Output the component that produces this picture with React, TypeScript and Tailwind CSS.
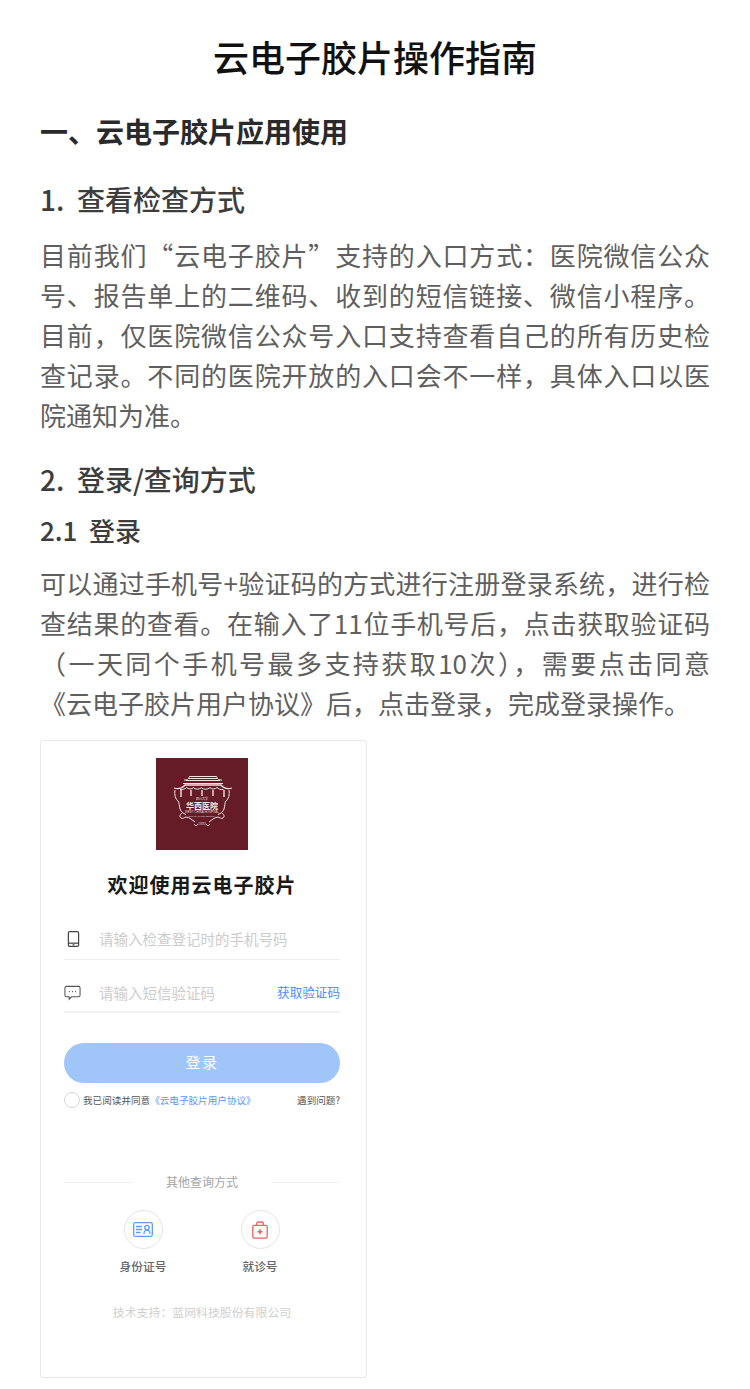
const cjk = "font-['Noto_Sans_CJK_SC','Noto_Sans',sans-serif]";

const intro =
  "目前我们“云电子胶片”支持的入口方式\uFF1A医院微信公众号、报告单上的二维码、收到的短信链接、微信小程序。目前\uFF0C仅医院微信公众号入口支持查看自己的所有历史检查记录。不同的医院开放的入口会不一样\uFF0C具体入口以医院通知为准。";
const loginBefore =
  "可以通过手机号+验证码的方式进行注册登录系统\uFF0C进行检查结果的查看。在输入了11位手机号后\uFF0C点击获取验证码\uFF08一天同个手机号最多支持获取10次\uFF09\uFF0C需要点击同意";
const loginAfter = "后\uFF0C点击登录\uFF0C完成登录操作。";

function PhoneIcon() {
  return (
    <svg viewBox="0 0 14 18" className="w-[13px] h-[18px]" fill="none" stroke="#444" strokeWidth="1.3">
      <rect x="1.500" y="1" width="11" height="16" rx="1.500" />
      <path d="M1.500 13.500h11" />
      <path d="M6 15.300h2" />
    </svg>
  );
}

function ChatIcon() {
  return (
    <svg viewBox="0 0 18 16" className="w-[17px] h-[16px]" fill="none" stroke="#555" strokeWidth="1.1">
      <path d="M2.500 1h13A1.500 1.500 0 0 1 17 2.500v8a1.500 1.500 0 0 1-1.500 1.500H8L5.500 14.600V12h-3A1.500 1.500 0 0 1 1 10.500v-8A1.500 1.500 0 0 1 2.500 1z" />
      <path d="M5.200 6.600h1M8.500 6.600h1M11.800 6.600h1" strokeWidth="1.400" />
    </svg>
  );
}

function IdCardIcon() {
  return (
    <svg viewBox="0 0 20 15" className="w-[20px] h-[15px]" fill="none" stroke="#5b9cf6" strokeWidth="1.3">
      <rect x="0.700" y="0.700" width="18.600" height="13.600" rx="1.500" />
      <path d="M3 4.500h6M3 7.500h6M3 10.500h4.500" />
      <circle cx="14" cy="5.600" r="2.200" />
      <path d="M11 12c0-2.400 1.300-3.900 3-3.900s3 1.500 3 3.900" />
    </svg>
  );
}

function MedKitIcon() {
  return (
    <svg viewBox="0 0 16 18" className="w-[16px] h-[18px]" fill="none" stroke="#f0605a" strokeWidth="1.3">
      <rect x="0.800" y="4.400" width="14.400" height="12.800" rx="1.600" />
      <path d="M4.600 4.400V3a2 2 0 0 1 2-2h2.800a2 2 0 0 1 2 2v1.400" />
      <path d="M8 8.200v5M5.500 10.700h5" strokeWidth="1.600" />
    </svg>
  );
}

function HospitalLogo() {
  return (
    <div className="relative w-[92px] h-[92px] bg-[#651c27]">
      <svg viewBox="0 0 92 92" className="absolute inset-0 w-full h-full blur-[0.3px]" fill="none" stroke="#f1e4e2">
        {/* roof */}
        <path d="M28 22c3 .4 4.500-.8 5.500-3.500h27c1 2.700 2.500 3.900 5.500 3.500" strokeWidth="1" />
        <path d="M30 22.500h34M33 20.500h28" strokeWidth="1" />
        <path d="M27 25.500h40" strokeWidth="1.200" />
        {/* gate beam */}
        <path d="M18 30c4 1.200 8 .6 11-3h36c3 3.600 7 4.200 11 3" strokeWidth="1.300" />
        <path d="M24 31.500c3 .4 5-.6 6.500-2 2 1.800 5 2 7 .2 2 1.800 5 2 8 .1 2.500 1.900 6 1.900 8.500-.1 2 1.800 5 1.600 7-.2 1.500 1.400 3.500 2.400 6.500 2" strokeWidth="1" />
        <path d="M25 32v7M35 32v6M46 32v6M57 32v6M68 32v7" strokeWidth="1.400" />
        {/* crest */}
        <path d="M19 32c-.8 5 .4 9 3 11 1.500 1.500 1 5 2 8 .8 2.500 3 4.500 6 5.500" strokeWidth="1" />
        <path d="M73 32c.8 5-.4 9-3 11-1.500 1.500-1 5-2 8-.8 2.500-3 4.500-6 5.500" strokeWidth="1" />
        <path d="M26 55c-2 1.500-3 3.500-1 5 2 1 3-.5 5-1 4 .5 6 3 9 5M66 55c2 1.500 3 3.500 1 5-2 1-3-.5-5-1-4 .5-6 3-9 5" strokeWidth="1" />
        <path d="M38 66l2 2 2-2M50 66l2 2 2-2" strokeWidth="0.800" />
      </svg>
      <div className="absolute left-0 right-0 top-[40px] text-center text-[#f1e4e2] text-[3px] leading-[3px]">四川大学</div>
      <div className="absolute left-0 right-0 top-[44px] text-center text-[#f5ecea] text-[8px] leading-[8px] font-bold">华西医院</div>
      <div className="absolute left-0 right-0 top-[53px] text-center text-[#e8d8d6] text-[3px] leading-[3px] font-['Liberation_Sans',sans-serif]">WEST CHINA HOSPITAL</div>
      <div className="absolute left-0 right-0 top-[56.500px] text-center text-[#e8d8d6] text-[2.500px] leading-[3px] font-['Liberation_Sans',sans-serif]">SICHUAN UNIVERSITY</div>
      <div className="absolute left-0 right-0 top-[63.500px] text-center text-[#e8d8d6] text-[4px] leading-[4px] font-['Liberation_Serif',serif]">1892</div>
    </div>
  );
}

function LoginCard() {
  return (
    <div className="w-[327px] h-[638px] mt-[17px] border border-[#e8e8e8] rounded-[3px] bg-white flex flex-col items-center pt-[17px] pl-[23px] pr-[26px]">
      <HospitalLogo />
      <div className="mt-[23px] h-[24px] leading-[24px] text-[20px] tracking-[1px] font-bold text-[#1a1a1a]">欢迎使用云电子胶片</div>

      <div className="w-full mt-[12px] h-[51px] border-b border-[#efefef] flex items-center pl-[3px] pt-[9px]">
        <PhoneIcon />
        <span className="ml-[19px] text-[14.500px] text-[#cccccc]">请输入检查登记时的手机号码</span>
      </div>
      <div className="w-full h-[53px] border-b-2 border-[#f2f2f2] flex items-center pt-[14px]">
        <ChatIcon />
        <span className="ml-[18px] text-[14.500px] text-[#cccccc]">请输入短信验证码</span>
        <span className="ml-auto text-[12.600px] text-[#4a8ef5]">获取验证码</span>
      </div>

      <div className="w-full mt-[30px] h-[40px] rounded-full bg-[#a0c5f9] flex items-center justify-center pb-[2px] text-[15px] tracking-[1.500px] text-white">登录</div>

      <div className="w-full mt-[9px] h-[16px] flex items-center text-[9.600px] text-[#555]">
        <span className="w-[16px] h-[16px] rounded-full border border-[#d5d5d5] mr-[3px]" />
        <span>我已阅读并同意</span>
        <span className="text-[#5a97f2]">《云电子胶片用户协议》</span>
        <span className="ml-auto">遇到问题?</span>
      </div>

      <div className="w-full mt-[65px] flex items-center text-[12px] text-[#a3a3a3]">
        <span className="w-[69px] h-[1px] bg-[#f0f0f0]" />
        <span className="flex-1 text-center leading-[18px]">其他查询方式</span>
        <span className="w-[69px] h-[1px] bg-[#f0f0f0]" />
      </div>

      <div className="w-full mt-[19px] flex justify-center gap-[70px] pr-[1px]">
        <div className="w-[47px] flex flex-col items-center">
          <div className="w-[39px] h-[39px] rounded-full border border-[#e5e5e5] flex items-center justify-center">
            <IdCardIcon />
          </div>
          <span className="mt-[8px] text-[11.700px] leading-[18px] font-medium text-[#666]">身份证号</span>
        </div>
        <div className="w-[47px] flex flex-col items-center">
          <div className="w-[39px] h-[39px] rounded-full border border-[#e5e5e5] flex items-center justify-center">
            <MedKitIcon />
          </div>
          <span className="mt-[8px] text-[11.700px] leading-[18px] font-medium text-[#666]">就诊号</span>
        </div>
      </div>

      <div className="mt-[28px] text-[11.900px] leading-[18px] text-[#cfcfcf]">{"技术支持\uFF1A蓝网科技股份有限公司"}</div>
    </div>
  );
}

export default function App() {
  return (
    <div lang="zh-CN" className={`bg-white w-[750px] min-h-[1389px] px-10 ${cjk}`}>
      <h1 className="pt-[31px] text-center text-[36px] leading-[50px] font-medium text-[#111]">云电子胶片操作指南</h1>

      <h2 className="mt-[30px] text-[28px] leading-[40px] font-bold text-[#2a2a2a]">一、云电子胶片应用使用</h2>

      <h3 className="mt-[28px] text-[28px] leading-[40px] font-medium text-[#3d3d3d]">1.&nbsp;&nbsp;查看检查方式</h3>
      <p className="mt-[16px] text-[26px] leading-[40px] text-justify text-[#5f5f5f]">{intro}</p>

      <h3 className="mt-[24px] text-[28px] leading-[40px] font-medium text-[#3d3d3d]">2.&nbsp;&nbsp;登录/查询方式</h3>
      <h4 className="mt-[11px] text-[26px] leading-[40px] font-medium text-[#3d3d3d]">2.1&nbsp;&nbsp;登录</h4>
      <p className="mt-[13px] text-[26px] leading-[40px] text-justify text-[#5f5f5f]">
        {loginBefore}
        <span className="inline-block">《云电子胶片用户协议》</span>
        {loginAfter}
      </p>

      <LoginCard />
    </div>
  );
}
